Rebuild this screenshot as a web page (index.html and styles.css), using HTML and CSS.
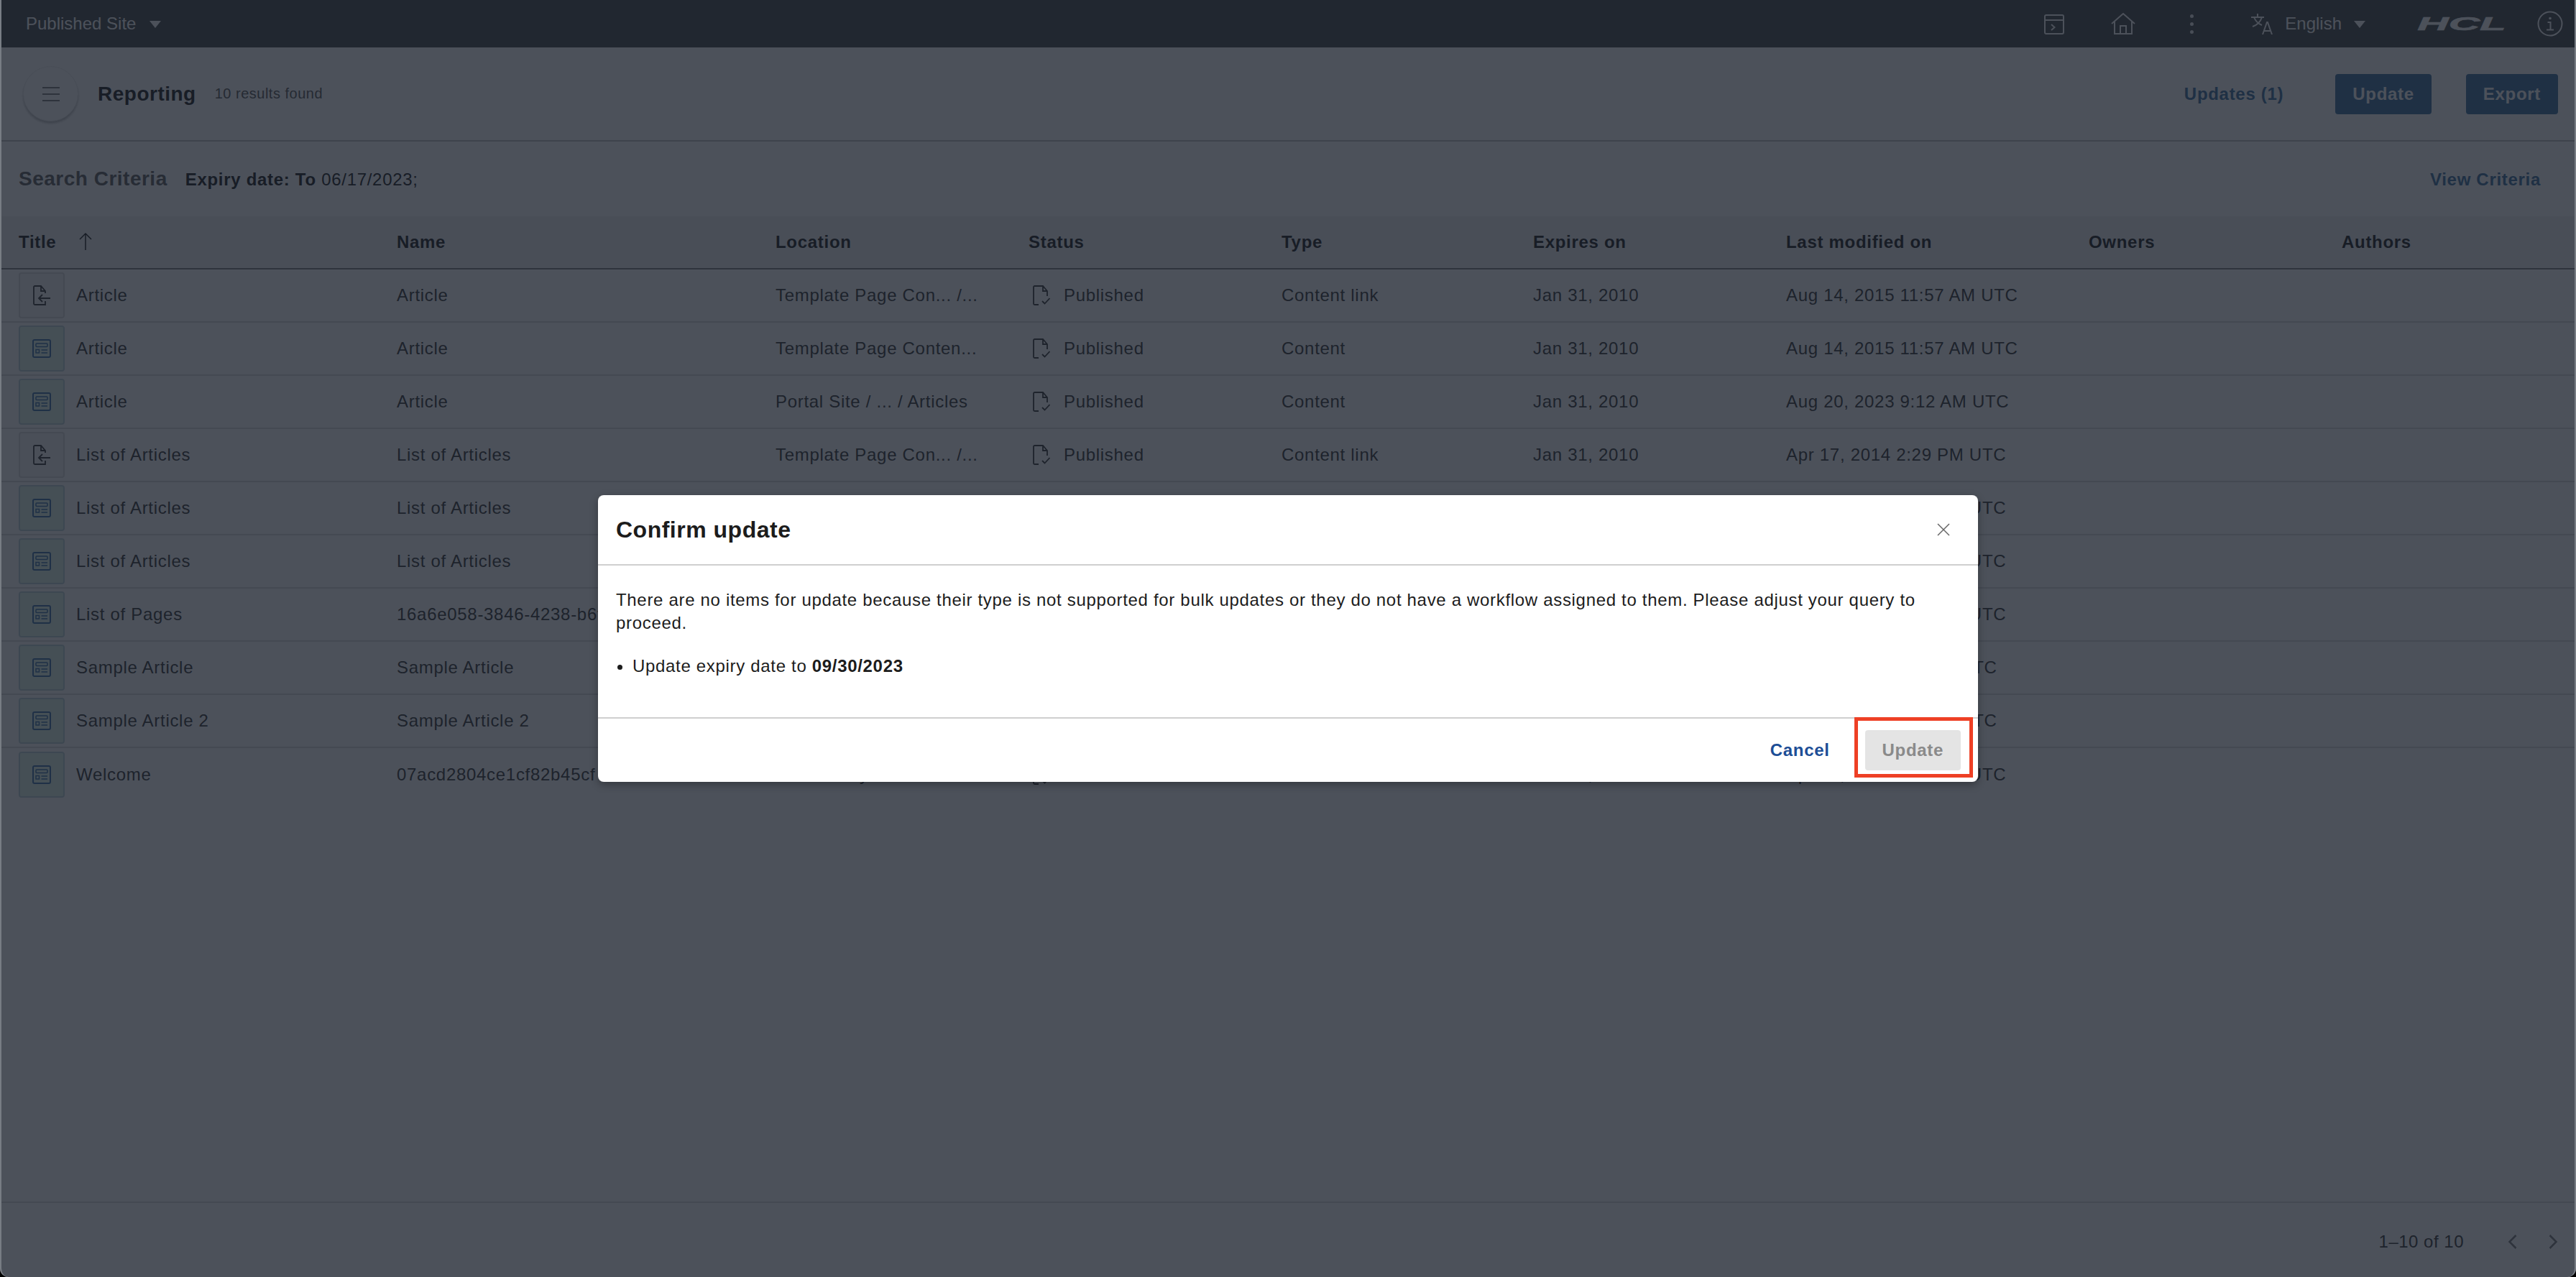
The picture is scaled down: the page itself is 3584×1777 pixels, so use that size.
FILE: index.html
```html
<!DOCTYPE html>
<html lang="en">
<head>
<meta charset="UTF-8" />
<meta name="viewport" content="width=device-width, initial-scale=1" />
<title>Reporting</title>
<link rel="stylesheet" href="styles.css">
</head>
<body>

<svg class="icon-defs" width="0" height="0">
  <symbol id="i-form" viewBox="0 0 26 26">
    <rect x="1" y="1" width="24" height="24" rx="2" fill="none" stroke="currentColor" stroke-width="2"/>
    <rect x="5" y="6" width="16" height="4.500" rx="1" fill="none" stroke="currentColor" stroke-width="1.500"/>
    <rect x="5" y="14.500" width="4.500" height="4.500" fill="none" stroke="currentColor" stroke-width="1.500"/>
    <path d="M12.500 15h8.500M12.500 19h8.500" fill="none" stroke="currentColor" stroke-width="1.500"/>
  </symbol>
  <symbol id="i-link" viewBox="0 0 24 28">
    <path d="M17 11V8l-6-7H2.500A1.500 1.500 0 0 0 1 2.500v23A1.500 1.500 0 0 0 2.500 27H17v-5M11 1v7h6" fill="none" stroke="currentColor" stroke-width="1.800"/>
    <path d="M24 18H8M13 13l-5 5 5 5" fill="none" stroke="currentColor" stroke-width="1.800"/>
  </symbol>
  <symbol id="i-status" viewBox="0 0 24 28">
    <path d="M20 15V8l-6-7H2.500A1.500 1.500 0 0 0 1 2.500v23A1.500 1.500 0 0 0 2.500 27H8M14 1v7h6" fill="none" stroke="currentColor" stroke-width="1.800"/>
    <path d="M13 22l3.500 3.500L23.500 18" fill="none" stroke="currentColor" stroke-width="1.800"/>
  </symbol>
</svg>

<div class="page">
  <header class="topbar">
    <div class="site-picker">Published Site <span class="caret"></span></div>
    <div class="topbar-right">
      <svg class="icon-term" viewBox="0 0 28 28" fill="none" stroke="currentColor" stroke-width="2">
        <rect x="1" y="1" width="26" height="26" rx="2"/>
        <path d="M1 8h26M10 14l4.500 4-4.500 4"/>
      </svg>
      <svg class="icon-home" viewBox="0 0 34 30" fill="none" stroke="currentColor" stroke-width="2">
        <path d="M1 15L17 1l16 14M5 12v17h24V12M13 29V18h8v11"/>
      </svg>
      <div class="dots"><i></i><i></i><i></i></div>
      <div class="lang">
        <svg class="icon-lang" viewBox="0 0 32 30" fill="none" stroke="currentColor" stroke-width="2">
          <path d="M0 6h18M9 1v5M15 6c-2 6-7 11-13 13M4 6c2 5 6 9 11 11M16 30l6-17h1l6 17M18 25h9"/>
        </svg>
        <span class="lang-name">English</span>
        <span class="caret"></span>
      </div>
      <div class="logo">HCL</div>
      <svg class="icon-info" viewBox="0 0 36 36" fill="none" stroke="currentColor" stroke-width="2">
        <circle cx="18" cy="18" r="16.500"/>
        <circle cx="18" cy="10.500" r="1.800" fill="currentColor" stroke="none"/>
        <path d="M14.500 16h4v10M13 26.500h10"/>
      </svg>
    </div>
  </header>

  <main class="content">
    <section class="toolbar">
      <button class="menu-btn"><span></span><span></span><span></span></button>
      <h1>Reporting</h1>
      <span class="count">10 results found</span>
      <div class="toolbar-actions">
        <a href="#" class="link-btn">Updates (1)</a>
        <button class="btn-primary">Update</button>
        <button class="btn-primary">Export</button>
      </div>
    </section>

    <section class="criteria">
      <h2>Search Criteria</h2>
      <p><b>Expiry date: To</b> 06/17/2023;</p>
      <a href="#" class="link-btn">View Criteria</a>
    </section>

    <table class="results">
      <colgroup>
        <col class="c-title"><col class="c-name"><col class="c-location"><col class="c-status"><col class="c-type"><col class="c-expires"><col class="c-modified"><col class="c-owners"><col class="c-authors">
      </colgroup>
      <thead>
        <tr>
          <th class="first">Title
            <svg class="icon-sort" viewBox="0 0 20 24" fill="none" stroke="currentColor" stroke-width="1.500"><path d="M10 24V1M2 9l8-8 8 8"/></svg>
          </th>
          <th>Name</th><th>Location</th><th>Status</th><th>Type</th><th>Expires on</th><th>Last modified on</th><th>Owners</th><th>Authors</th>
        </tr>
      </thead>
      <tbody>
        <tr>
          <td class="first"><div class="title-cell"><span class="tile"><svg class="icon-link"><use href="#i-link"/></svg></span>Article</div></td>
          <td>Article</td><td>Template Page Con... /...</td>
          <td><div class="status"><svg class="icon-status"><use href="#i-status"/></svg>Published</div></td>
          <td>Content link</td><td>Jan 31, 2010</td><td>Aug 14, 2015 11:57 AM UTC</td><td></td><td></td>
        </tr>
        <tr>
          <td class="first"><div class="title-cell"><span class="tile tile-content"><svg class="icon-form"><use href="#i-form"/></svg></span>Article</div></td>
          <td>Article</td><td>Template Page Conten...</td>
          <td><div class="status"><svg class="icon-status"><use href="#i-status"/></svg>Published</div></td>
          <td>Content</td><td>Jan 31, 2010</td><td>Aug 14, 2015 11:57 AM UTC</td><td></td><td></td>
        </tr>
        <tr>
          <td class="first"><div class="title-cell"><span class="tile tile-content"><svg class="icon-form"><use href="#i-form"/></svg></span>Article</div></td>
          <td>Article</td><td>Portal Site / ... / Articles</td>
          <td><div class="status"><svg class="icon-status"><use href="#i-status"/></svg>Published</div></td>
          <td>Content</td><td>Jan 31, 2010</td><td>Aug 20, 2023 9:12 AM UTC</td><td></td><td></td>
        </tr>
        <tr>
          <td class="first"><div class="title-cell"><span class="tile"><svg class="icon-link"><use href="#i-link"/></svg></span>List of Articles</div></td>
          <td>List of Articles</td><td>Template Page Con... /...</td>
          <td><div class="status"><svg class="icon-status"><use href="#i-status"/></svg>Published</div></td>
          <td>Content link</td><td>Jan 31, 2010</td><td>Apr 17, 2014 2:29 PM UTC</td><td></td><td></td>
        </tr>
        <tr>
          <td class="first"><div class="title-cell"><span class="tile tile-content"><svg class="icon-form"><use href="#i-form"/></svg></span>List of Articles</div></td>
          <td>List of Articles</td><td></td><td></td><td></td><td></td>
          <td>Apr 17, 2014 2:29 PM UTC</td><td></td><td></td>
        </tr>
        <tr>
          <td class="first"><div class="title-cell"><span class="tile tile-content"><svg class="icon-form"><use href="#i-form"/></svg></span>List of Articles</div></td>
          <td>List of Articles</td><td></td><td></td><td></td><td></td>
          <td>Apr 17, 2014 2:30 PM UTC</td><td></td><td></td>
        </tr>
        <tr>
          <td class="first"><div class="title-cell"><span class="tile tile-content"><svg class="icon-form"><use href="#i-form"/></svg></span>List of Pages</div></td>
          <td>16a6e058-3846-4238-b6f4</td><td></td><td></td><td></td><td></td>
          <td>Apr 17, 2014 2:30 PM UTC</td><td></td><td></td>
        </tr>
        <tr>
          <td class="first"><div class="title-cell"><span class="tile tile-content"><svg class="icon-form"><use href="#i-form"/></svg></span>Sample Article</div></td>
          <td>Sample Article</td><td></td><td></td><td></td><td></td>
          <td>Jan 7, 2014 2:29 PM UTC</td><td></td><td></td>
        </tr>
        <tr>
          <td class="first"><div class="title-cell"><span class="tile tile-content"><svg class="icon-form"><use href="#i-form"/></svg></span>Sample Article 2</div></td>
          <td>Sample Article 2</td><td></td><td></td><td></td><td></td>
          <td>Jan 7, 2014 2:29 PM UTC</td><td></td><td></td>
        </tr>
        <tr>
          <td class="first"><div class="title-cell"><span class="tile tile-content"><svg class="icon-form"><use href="#i-form"/></svg></span>Welcome</div></td>
          <td>07acd2804ce1cf82b45cf</td><td>Site Library</td>
          <td><div class="status"><svg class="icon-status"><use href="#i-status"/></svg>Published</div></td>
          <td>Content</td><td>Jan 31, 2010</td><td>Apr 17, 2014 2:30 PM UTC</td><td></td><td></td>
        </tr>
      </tbody>
    </table>

    <footer class="pager">
      <span>1–10 of 10</span>
      <svg class="icon-prev" viewBox="0 0 13 20" fill="none" stroke="currentColor" stroke-width="2.500"><path d="M11.500 1l-9 9 9 9"/></svg>
      <svg class="icon-next" viewBox="0 0 13 20" fill="none" stroke="currentColor" stroke-width="2.500"><path d="M1.500 1l9 9-9 9"/></svg>
    </footer>
  </main>

  <!-- Dialog, over everything else -->
  <div class="backdrop">
    <div class="modal">
      <div class="modal-head">
        <h3>Confirm update</h3>
        <svg class="icon-close" viewBox="0 0 18 18" fill="none" stroke="currentColor" stroke-width="1.500"><path d="M1 1l16 16M17 1L1 17"/></svg>
      </div>
      <div class="modal-body">
        <p>There are no items for update because their type is not supported for bulk updates or they do not have a workflow assigned to them. Please adjust your query to proceed.</p>
        <ul>
          <li>Update expiry date to <b>09/30/2023</b></li>
        </ul>
      </div>
      <div class="modal-foot">
        <button class="btn-text">Cancel</button>
        <button class="btn-disabled" disabled>Update</button>
        <div class="highlight"></div>
      </div>
    </div>
  </div>

  <div class="window-edge"></div>
</div>

</body>
</html>
```

FILE: styles.css
```css
html, body {
  margin: 0;
  padding: 0;
  background: #000;
}
body {
  font-family: "Liberation Sans", Arial, sans-serif;
  font-size: 24px;
  letter-spacing: 0.7px;
  color: #484848;
}
h1, h2, h3, p, ul {
  margin: 0;
  padding: 0;
}
button {
  font: inherit;
  letter-spacing: inherit;
  border: none;
  cursor: pointer;
}
a {
  text-decoration: none;
}
.icon-defs {
  position: absolute;
}
.page {
  position: relative;
  display: flex;
  flex-direction: column;
  height: 1777px;
  overflow: hidden;
  background: #fff;
  border-radius: 0 0 12px 12px;
}

/* Top bar */
.topbar {
  display: flex;
  align-items: center;
  justify-content: space-between;
  flex: none;
  height: 66px;
  padding: 0 18px 0 36px;
  background: #545858;
  color: #fff;
  letter-spacing: 0;
}
.site-picker {
  display: flex;
  align-items: center;
  gap: 19px;
}
.caret {
  width: 0;
  height: 0;
  margin-top: 2px;
  border-left: 8px solid transparent;
  border-right: 8px solid transparent;
  border-top: 10px solid #fff;
}
.topbar-right {
  display: flex;
  align-items: center;
}
.icon-term {
  width: 28px;
  height: 28px;
  margin-top: 2px;
}
.icon-home {
  width: 34px;
  height: 30px;
  margin-left: 65px;
}
.dots {
  display: flex;
  flex-direction: column;
  gap: 6px;
  margin-left: 76px;
}
.dots i {
  width: 5px;
  height: 5px;
  border-radius: 50%;
  background: #eee;
}
.lang {
  display: flex;
  align-items: center;
  margin-left: 80px;
}
.icon-lang {
  width: 32px;
  height: 30px;
}
.lang-name {
  margin-left: 15px;
  margin-right: 17px;
}
.logo {
  width: 126px;
  margin-left: 71px;
  font-size: 25px;
  font-weight: bold;
  font-style: italic;
  line-height: 1;
  letter-spacing: 0;
  text-align: center;
  white-space: nowrap;
  -webkit-text-stroke: 0.6px #fff;
  transform: scaleX(2.4);
}
.icon-info {
  width: 36px;
  height: 36px;
  margin-left: 42px;
}

/* Main content */
.content {
  display: flex;
  flex-direction: column;
  flex: 1;
}
.toolbar {
  display: flex;
  align-items: center;
  flex: none;
  height: 131px;
  padding: 0 25px 0 32px;
  border-bottom: 2px solid #c8c8c8;
  box-sizing: border-box;
}
.menu-btn {
  display: flex;
  flex-direction: column;
  align-items: center;
  justify-content: center;
  gap: 7px;
  width: 77px;
  height: 77px;
  padding: 0;
  margin-right: 27px;
  border-radius: 50%;
  background: #fff;
  border: 1px solid #eee;
  box-shadow: 0 3px 3px rgba(0, 0, 0, 0.22);
}
.menu-btn span {
  width: 24px;
  height: 2px;
  background: #888;
}
.toolbar h1 {
  font-size: 28px;
  letter-spacing: 0.5px;
  color: #333;
}
.count {
  margin-left: 26px;
  font-size: 20px;
  letter-spacing: 0.5px;
  color: #666;
}
.toolbar-actions {
  display: flex;
  align-items: center;
  gap: 48px;
  margin-left: auto;
}
.link-btn {
  font-weight: bold;
  color: #4c7ca8;
}
.toolbar-actions .link-btn {
  margin-right: 24px;
}
.btn-primary {
  height: 56px;
  padding: 0 24px;
  border-radius: 4px;
  background: #4c7ca8;
  color: #fff;
  font-weight: bold;
}
.criteria {
  display: flex;
  align-items: baseline;
  flex: none;
  height: 104px;
  padding: 36px 49px 0 26px;
  box-sizing: border-box;
}
.criteria h2 {
  font-size: 28px;
  letter-spacing: 0.5px;
  color: #6e6e6e;
}
.criteria p {
  margin-left: 25px;
  color: #333;
}
.criteria .link-btn {
  margin-left: auto;
}

/* Results table */
.results {
  flex: none;
  width: 100%;
  table-layout: fixed;
  border-collapse: separate;
  border-spacing: 0;
}
.c-title { width: 552px; }
.c-name { width: 527px; }
.c-location { width: 352px; }
.c-status { width: 352px; }
.c-type { width: 350px; }
.c-expires { width: 352px; }
.c-modified { width: 421px; }
.c-owners { width: 352px; }
.c-authors { width: 326px; }
.results th {
  height: 74px;
  padding: 0;
  box-sizing: border-box;
  background: #f2f2f2;
  border-bottom: 2px solid #8c8c8c;
  text-align: left;
  font-weight: bold;
  color: #333;
}
.results td {
  height: 74px;
  padding: 0;
  box-sizing: border-box;
  border-bottom: 2px solid #e0e0e0;
  white-space: nowrap;
}
.results tbody tr:last-child td {
  border-bottom: none;
}
.results .first {
  padding-left: 26px;
}
.icon-sort {
  width: 20px;
  height: 24px;
  margin-left: 23px;
  vertical-align: -3px;
}
.title-cell {
  display: flex;
  align-items: center;
  gap: 16px;
}
.tile {
  display: flex;
  align-items: center;
  justify-content: center;
  width: 64px;
  height: 64px;
  box-sizing: border-box;
  border: 2px solid #e0e0e0;
  border-radius: 4px;
  background: #f6f6f6;
  color: #484848;
}
.tile-content {
  border-color: #c4d8dc;
  background: #e4f8ec;
  color: #4c7cb0;
}
.icon-form {
  width: 26px;
  height: 26px;
}
.icon-link {
  width: 24px;
  height: 28px;
}
.status {
  display: flex;
  align-items: center;
  gap: 19px;
}
.icon-status {
  width: 24px;
  height: 28px;
  margin-left: 6px;
}

/* Pager */
.pager {
  display: flex;
  align-items: center;
  justify-content: flex-end;
  flex: none;
  height: 105px;
  margin-top: auto;
  padding: 4px 25px 0 0;
  box-sizing: border-box;
  border-top: 2px solid #e0e0e0;
  letter-spacing: 0.5px;
}
.icon-prev {
  width: 13px;
  height: 20px;
  margin-left: 61px;
  color: #888;
}
.icon-next {
  width: 13px;
  height: 20px;
  margin-left: 44px;
  color: #888;
}

/* Dialog */
.backdrop {
  position: absolute;
  inset: 0;
  display: flex;
  align-items: center;
  justify-content: center;
  background: rgba(16, 23, 35, 0.75);
}
.modal {
  width: 1920px;
  border-radius: 8px;
  background: #fff;
  color: #1c1c1c;
  letter-spacing: 0.68px;
  box-shadow: 0 4px 12px rgba(0, 0, 0, 0.3);
}
.modal-head {
  display: flex;
  align-items: center;
  justify-content: space-between;
  height: 98px;
  padding: 0 39px 0 25px;
  box-sizing: border-box;
  border-bottom: 2px solid #cfcfcf;
}
.modal-head h3 {
  font-size: 32px;
  letter-spacing: 0.5px;
}
.icon-close {
  width: 18px;
  height: 18px;
  color: #666;
}
.modal-body {
  padding: 32px 25px 55px;
  line-height: 32px;
}
.modal-body ul {
  margin-top: 28px;
  padding-left: 23px;
}
.modal-foot {
  position: relative;
  display: flex;
  align-items: center;
  justify-content: flex-end;
  gap: 49px;
  height: 90px;
  padding: 16px 24px 16px 0;
  box-sizing: border-box;
  border-top: 2px solid #cfcfcf;
}
.btn-text {
  padding: 0;
  background: none;
  color: #1d4e96;
  font-weight: bold;
}
.btn-disabled {
  height: 56px;
  padding: 0 24px;
  border-radius: 4px;
  background: #e4e4e4;
  color: #8a8a8a;
  font-weight: bold;
  cursor: not-allowed;
}
.highlight {
  position: absolute;
  top: -2px;
  right: 7px;
  width: 165px;
  height: 84px;
  box-sizing: border-box;
  border: 5px solid #ee4025;
}

/* Edge of the captured window */
.window-edge {
  position: absolute;
  inset: 0;
  border-left: 2px solid #787d84;
  border-right: 2px solid #787d84;
  border-radius: 0 0 12px 12px;
  pointer-events: none;
}
```
